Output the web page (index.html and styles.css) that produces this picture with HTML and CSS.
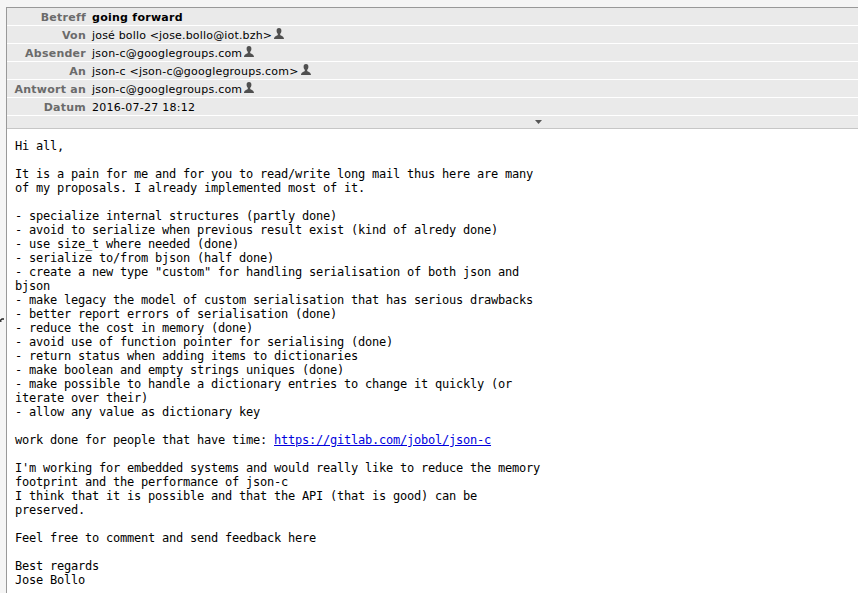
FILE: index.html
```html
<!DOCTYPE html>
<html lang="de">
<head>
<meta charset="utf-8">
<title>going forward</title>
<link rel="stylesheet" href="styles.css">
</head>
<body>
<svg width="0" height="0" class="defs"><symbol id="person" viewBox="0 0 10 11"><path d="M5 0C3.300 0 2.600 1.100 2.600 2.700c0 1.400.5 2.300 1.200 3v1.300C3.300 8 .1 7.800 0 11h10C9.900 7.800 6.700 8 6.200 7V5.700c.7-.7 1.200-1.600 1.200-3C7.400 1.100 6.700 0 5 0z"/></symbol></svg>
<div class="window">
<aside class="splitter"><svg width="4" height="7" viewBox="0 0 4 7"><path d="M.8 5V2.600M0 3.500L2 2H4" fill="none" stroke="#222" stroke-width="1.300"/></svg></aside>
<main class="message">
<header class="headers">
<div class="row"><span class="label">Betreff</span><span class="value subject">going forward</span></div>
<div class="row"><span class="label">Von</span><span class="value from">josé bollo &lt;jose.bollo@iot.bzh&gt;</span><svg class="person"><use href="#person"/></svg></div>
<div class="row"><span class="label">Absender</span><span class="value">json-c@googlegroups.com</span><svg class="person"><use href="#person"/></svg></div>
<div class="row"><span class="label">An</span><span class="value">json-c &lt;json-c@googlegroups.com&gt;</span><svg class="person"><use href="#person"/></svg></div>
<div class="row"><span class="label">Antwort an</span><span class="value">json-c@googlegroups.com</span><svg class="person"><use href="#person"/></svg></div>
<div class="row"><span class="label">Datum</span><span class="value date">2016-07-27 18:12</span></div>
<div class="toggle"><svg width="7" height="4" viewBox="0 0 7 4"><path d="M0 0H7L3.500 4z" fill="#555"/></svg></div>
</header>
<pre class="body">Hi all,

It is a pain for me and for you to read/write long mail thus here are many
of my proposals. I already implemented most of it.

- specialize internal structures (partly done)
- avoid to serialize when previous result exist (kind of alredy done)
- use size_t where needed (done)
- serialize to/from bjson (half done)
- create a new type "custom" for handling serialisation of both json and
bjson
- make legacy the model of custom serialisation that has serious drawbacks
- better report errors of serialisation (done)
- reduce the cost in memory (done)
- avoid use of function pointer for serialising (done)
- return status when adding items to dictionaries
- make boolean and empty strings uniques (done)
- make possible to handle a dictionary entries to change it quickly (or
iterate over their)
- allow any value as dictionary key

work done for people that have time: <a href="#">https://gitlab.com/jobol/json-c</a>

I'm working for embedded systems and would really like to reduce the memory
footprint and the performance of json-c
I think that it is possible and that the API (that is good) can be
preserved.

Feel free to comment and send feedback here

Best regards
Jose Bollo</pre>
</main>
</div>
</body>
</html>
```
FILE: styles.css
```css
* { box-sizing: border-box; }
body { margin: 0; background: #f5f5f5; overflow: hidden; }
.defs { display: block; }
.window { display: flex; height: 593px; padding-top: 7px; }
.splitter { width: 6px; padding-top: 310px; overflow: hidden; }
.splitter svg { display: block; }
.message { flex: 1; border-top: 1px solid #999; border-left: 1px solid #999; background: #fff; overflow: hidden; }
.headers { background: #eaeaea; border-bottom: 1px solid #c6c6c6; font: 11px/17px "DejaVu Sans", sans-serif; color: #000; }
.row { display: flex; height: 18px; border-bottom: 1px solid #fff; white-space: nowrap; }
.label { width: 79px; margin-right: 6px; text-align: right; font-weight: bold; letter-spacing: 0.25px; color: #6b6b6b; }
.label, .value { position: relative; top: 1px; }
.value { letter-spacing: 0.21px; }
.from { letter-spacing: 0.17px; }
.date { letter-spacing: 0.25px; }
.subject { font-weight: bold; letter-spacing: 0.27px; }
.person { width: 10px; height: 11px; margin: 2px 0 0 2px; fill: #505050; }
.toggle { height: 12px; padding: 4px 0 0 528px; }
.toggle svg { display: block; }
.body { margin: 0; padding: 10px 8px 0; font: 12px/14px "DejaVu Sans Mono", monospace; letter-spacing: -0.2246px; color: #000; }
.body a { color: #0000dd; }
```
